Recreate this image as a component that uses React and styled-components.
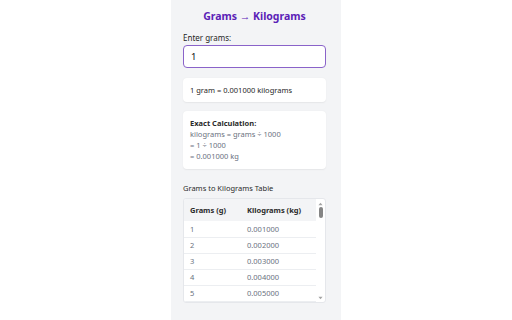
import React, { useState } from "react";
import styled, { createGlobalStyle } from "styled-components";

const GlobalStyle = createGlobalStyle`
  html, body {
    margin: 0;
    padding: 0;
    background: #ffffff;
    font-family: "Noto Sans", "Open Sans", sans-serif;
  }
  * { box-sizing: border-box; }
`;

const App = () => {
  const [grams, setGrams] = useState("1");
  const value = parseFloat(grams) || 0;
  const kg = (value / 1000).toFixed(6);
  const rows = [1, 2, 3, 4, 5];

  return (
    <>
      <GlobalStyle />
      <Page>
        <Panel>
          <Title>Grams → Kilograms</Title>
          <Label>Enter grams:</Label>
          <Input value={grams} onChange={(e) => setGrams(e.target.value)} />
          <ResultCard>
            {grams} gram = {kg} kilograms
          </ResultCard>
          <CalcCard>
            <CalcTitle>Exact Calculation:</CalcTitle>
            <CalcLine>kilograms = grams ÷ 1000</CalcLine>
            <CalcLine>= {grams} ÷ 1000</CalcLine>
            <CalcLine>= {kg} kg</CalcLine>
          </CalcCard>
          <TableTitle>Grams to Kilograms Table</TableTitle>
          <TableBox>
            <TableScroll>
              <Table>
                <thead>
                  <tr>
                    <Th $w={57}>Grams (g)</Th>
                    <Th>Kilograms (kg)</Th>
                  </tr>
                </thead>
                <tbody>
                  {rows.map((g) => (
                    <tr key={g}>
                      <Td>{g}</Td>
                      <Td>{(g / 1000).toFixed(6)}</Td>
                    </tr>
                  ))}
                </tbody>
              </Table>
            </TableScroll>
            <ScrollBar>
              <Arrow viewBox="0 0 6 4">
                <path d="M3 0.5 L5.5 3.5 L0.5 3.5 Z" />
              </Arrow>
              <ScrollTrack>
                <Thumb />
              </ScrollTrack>
              <Arrow viewBox="0 0 6 4">
                <path d="M0.5 0.5 L5.5 0.5 L3 3.5 Z" />
              </Arrow>
            </ScrollBar>
          </TableBox>
        </Panel>
      </Page>
    </>
  );
};

const Page = styled.div`
  display: flex;
  justify-content: center;
  min-height: 100vh;
`;

const Panel = styled.div`
  width: 170px;
  min-height: 320px;
  background: #f3f4f6;
  padding: 8px 15px 12px 12px;
  display: flex;
  flex-direction: column;
`;

const Title = styled.h1`
  margin: 0 0 8px;
  font-size: 10.5px;
  line-height: 16px;
  font-weight: 700;
  text-align: center;
  color: #5b21b6;
`;

const Label = styled.label`
  font-size: 8px;
  line-height: 12px;
  color: #1f1f1f;
  margin-bottom: 1px;
`;

const Input = styled.input`
  width: 100%;
  height: 23px;
  border: 1px solid #8a63c9;
  border-radius: 4px;
  padding: 0 7px;
  font-family: inherit;
  font-size: 9.5px;
  color: #111;
  background: #fff;
  outline: none;
`;

const Card = styled.div`
  background: #fff;
  border-radius: 4px;
  box-shadow: 0 0.5px 1.5px rgba(0, 0, 0, 0.06);
  padding: 0 7px;
  font-size: 7.5px;
`;

const ResultCard = styled(Card)`
  margin-top: 10px;
  height: 24px;
  display: flex;
  align-items: center;
  color: #1f1f1f;
`;

const CalcCard = styled(Card)`
  margin-top: 9px;
  padding-top: 7px;
  padding-bottom: 7px;
  line-height: 11px;
`;

const CalcTitle = styled.div`
  font-weight: 700;
  color: #2b2b2b;
`;

const CalcLine = styled.div`
  color: #6b7280;
`;

const TableTitle = styled.div`
  margin-top: 13px;
  font-size: 7.5px;
  line-height: 12px;
  color: #2b2b2b;
`;

const TableBox = styled.div`
  margin-top: 4px;
  height: 105px;
  display: flex;
  background: #fff;
  border: 0.5px solid #e5e7eb;
  border-radius: 3px;
  overflow: hidden;
`;

const TableScroll = styled.div`
  flex: 1;
  overflow: hidden;
`;

const ScrollBar = styled.div`
  width: 9px;
  display: flex;
  flex-direction: column;
  align-items: center;
  padding: 3px 0 2px;
`;

const Arrow = styled.svg`
  width: 5px;
  height: 4px;
  fill: #a3a3a3;
`;

const ScrollTrack = styled.div`
  flex: 1;
  width: 100%;
  display: flex;
  justify-content: center;
  padding-top: 1px;
`;

const Thumb = styled.div`
  width: 4px;
  height: 11px;
  border-radius: 2px;
  background: #858585;
`;

const Table = styled.table`
  width: 100%;
  border-collapse: collapse;
  font-size: 7.5px;
`;

const Th = styled.th`
  width: ${(p) => (p.$w ? `${p.$w}px` : "auto")};
  background: #f3f4f6;
  text-align: left;
  font-weight: 700;
  color: #2b2b2b;
  height: 22px;
  padding: 0 6px;
`;

const Td = styled.td`
  height: 16px;
  padding: 0 6px;
  color: #6b7280;
  border-bottom: 0.5px solid #eceef1;
`;

export default App;
